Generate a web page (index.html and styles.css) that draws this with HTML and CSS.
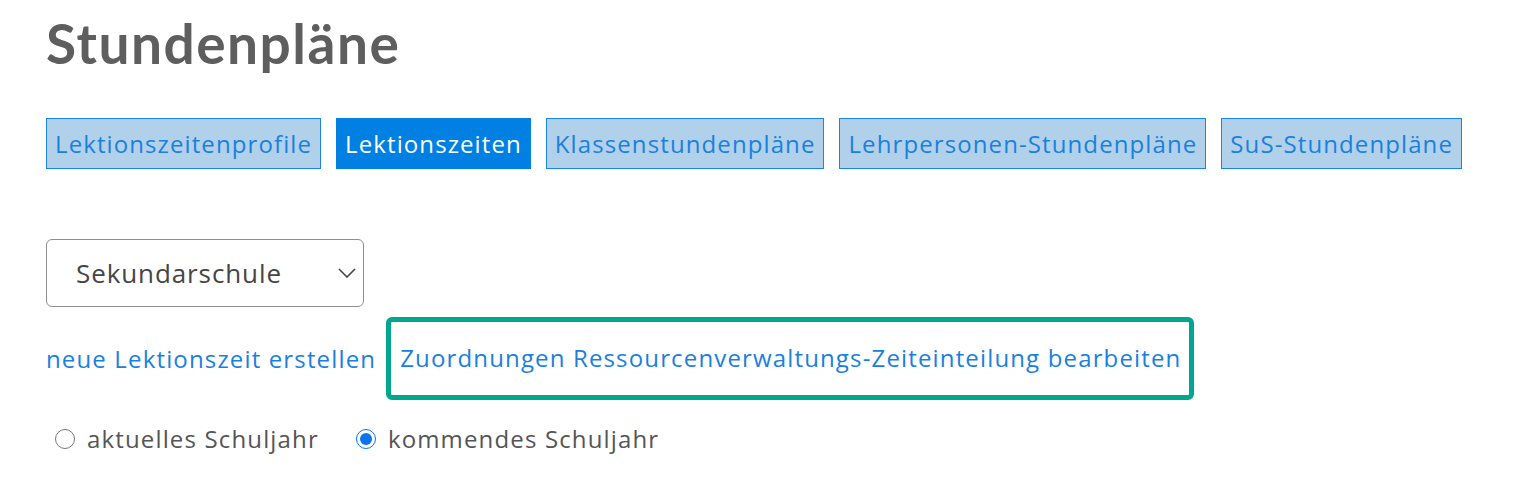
FILE: index.html
```html
<!DOCTYPE html>
<html lang="de">
<head>
<meta charset="utf-8">
<title>Stundenpläne</title>
<link rel="stylesheet" href="styles.css">
</head>
<body>
<main class="page">
  <h1 class="title">Stundenpläne</h1>
  <nav class="tabs">
    <a class="tab" href="#">Lektionszeitenprofile</a>
    <a class="tab tab-active" href="#">Lektionszeiten</a>
    <a class="tab" href="#">Klassenstundenpläne</a>
    <a class="tab" href="#">Lehrpersonen-Stundenpläne</a>
    <a class="tab" href="#">SuS-Stundenpläne</a>
  </nav>
  <div class="select-wrap">
    <div class="select">
      <span class="select-text">Sekundarschule</span>
      <svg class="chevron" width="18" height="10" viewBox="0 0 18 10"><path d="M1 1 L9 9 L17 1" fill="none" stroke="#444" stroke-width="1.6"/></svg>
    </div>
  </div>
  <div class="links">
    <a class="link" href="#">neue Lektionszeit erstellen</a>
    <div class="highlight"><a class="link" href="#">Zuordnungen Ressourcenverwaltungs-Zeiteinteilung bearbeiten</a></div>
  </div>
  <div class="radios">
    <label class="radio-label"><input type="radio" name="jahr" class="radio"> aktuelles Schuljahr</label>
    <label class="radio-label"><input type="radio" name="jahr" class="radio" checked> kommendes Schuljahr</label>
  </div>
</main>
</body>
</html>
```
FILE: styles.css
```css
html, body {
  margin: 0;
  padding: 0;
  background: #ffffff;
}
body {
  font-family: "Open Sans", "Lato", sans-serif;
  color: #555555;
}
.page {
  padding: 8px 0 0 46px;
}
.title {
  margin: 0;
  font-family: "Lato", "Open Sans", sans-serif;
  font-size: 55px;
  line-height: 70px;
  font-weight: 700;
  color: #5e5e5e;
  letter-spacing: 1.5px;
}
.tabs {
  display: flex;
  gap: 15px;
  margin-top: 40px;
}
.tab {
  display: block;
  padding: 8px 8px;
  font-size: 24px;
  line-height: 33px;
  letter-spacing: 1.1px;
  text-decoration: none;
  color: #1a80e0;
  background: #b1d1ea;
  border: 1px solid #1a85e6;
}
.tab-active {
  background: #0080e3;
  border-color: #0080e3;
  color: #ffffff;
}
.select-wrap {
  margin-top: 70px;
}
.select {
  box-sizing: border-box;
  width: 318px;
  height: 68px;
  border: 1px solid #8f8f8f;
  border-radius: 6px;
  display: flex;
  align-items: center;
  justify-content: space-between;
  padding: 0 7px 0 29px;
}
.select-text {
  font-size: 26px;
  letter-spacing: 0.9px;
  color: #454545;
}
.chevron {
  display: block;
}
.links {
  display: flex;
  align-items: center;
  gap: 10px;
  margin-top: 10px;
}
.link {
  font-size: 24px;
  line-height: 33px;
  letter-spacing: 1.15px;
  color: #1a80e0;
  text-decoration: none;
}
.highlight {
  border: 5px solid #00a68f;
  border-radius: 6px;
  padding: 19px 8px 21px 9px;
}
.radios {
  display: flex;
  gap: 37px;
  margin-top: 22px;
  padding-left: 9px;
}
.radio-label {
  display: flex;
  align-items: center;
  gap: 12px;
  font-size: 24px;
  line-height: 33px;
  letter-spacing: 1.15px;
  color: #555555;
}
.radio {
  margin: 0;
  width: 20px;
  height: 20px;
  accent-color: #0a74f0;
}
```
